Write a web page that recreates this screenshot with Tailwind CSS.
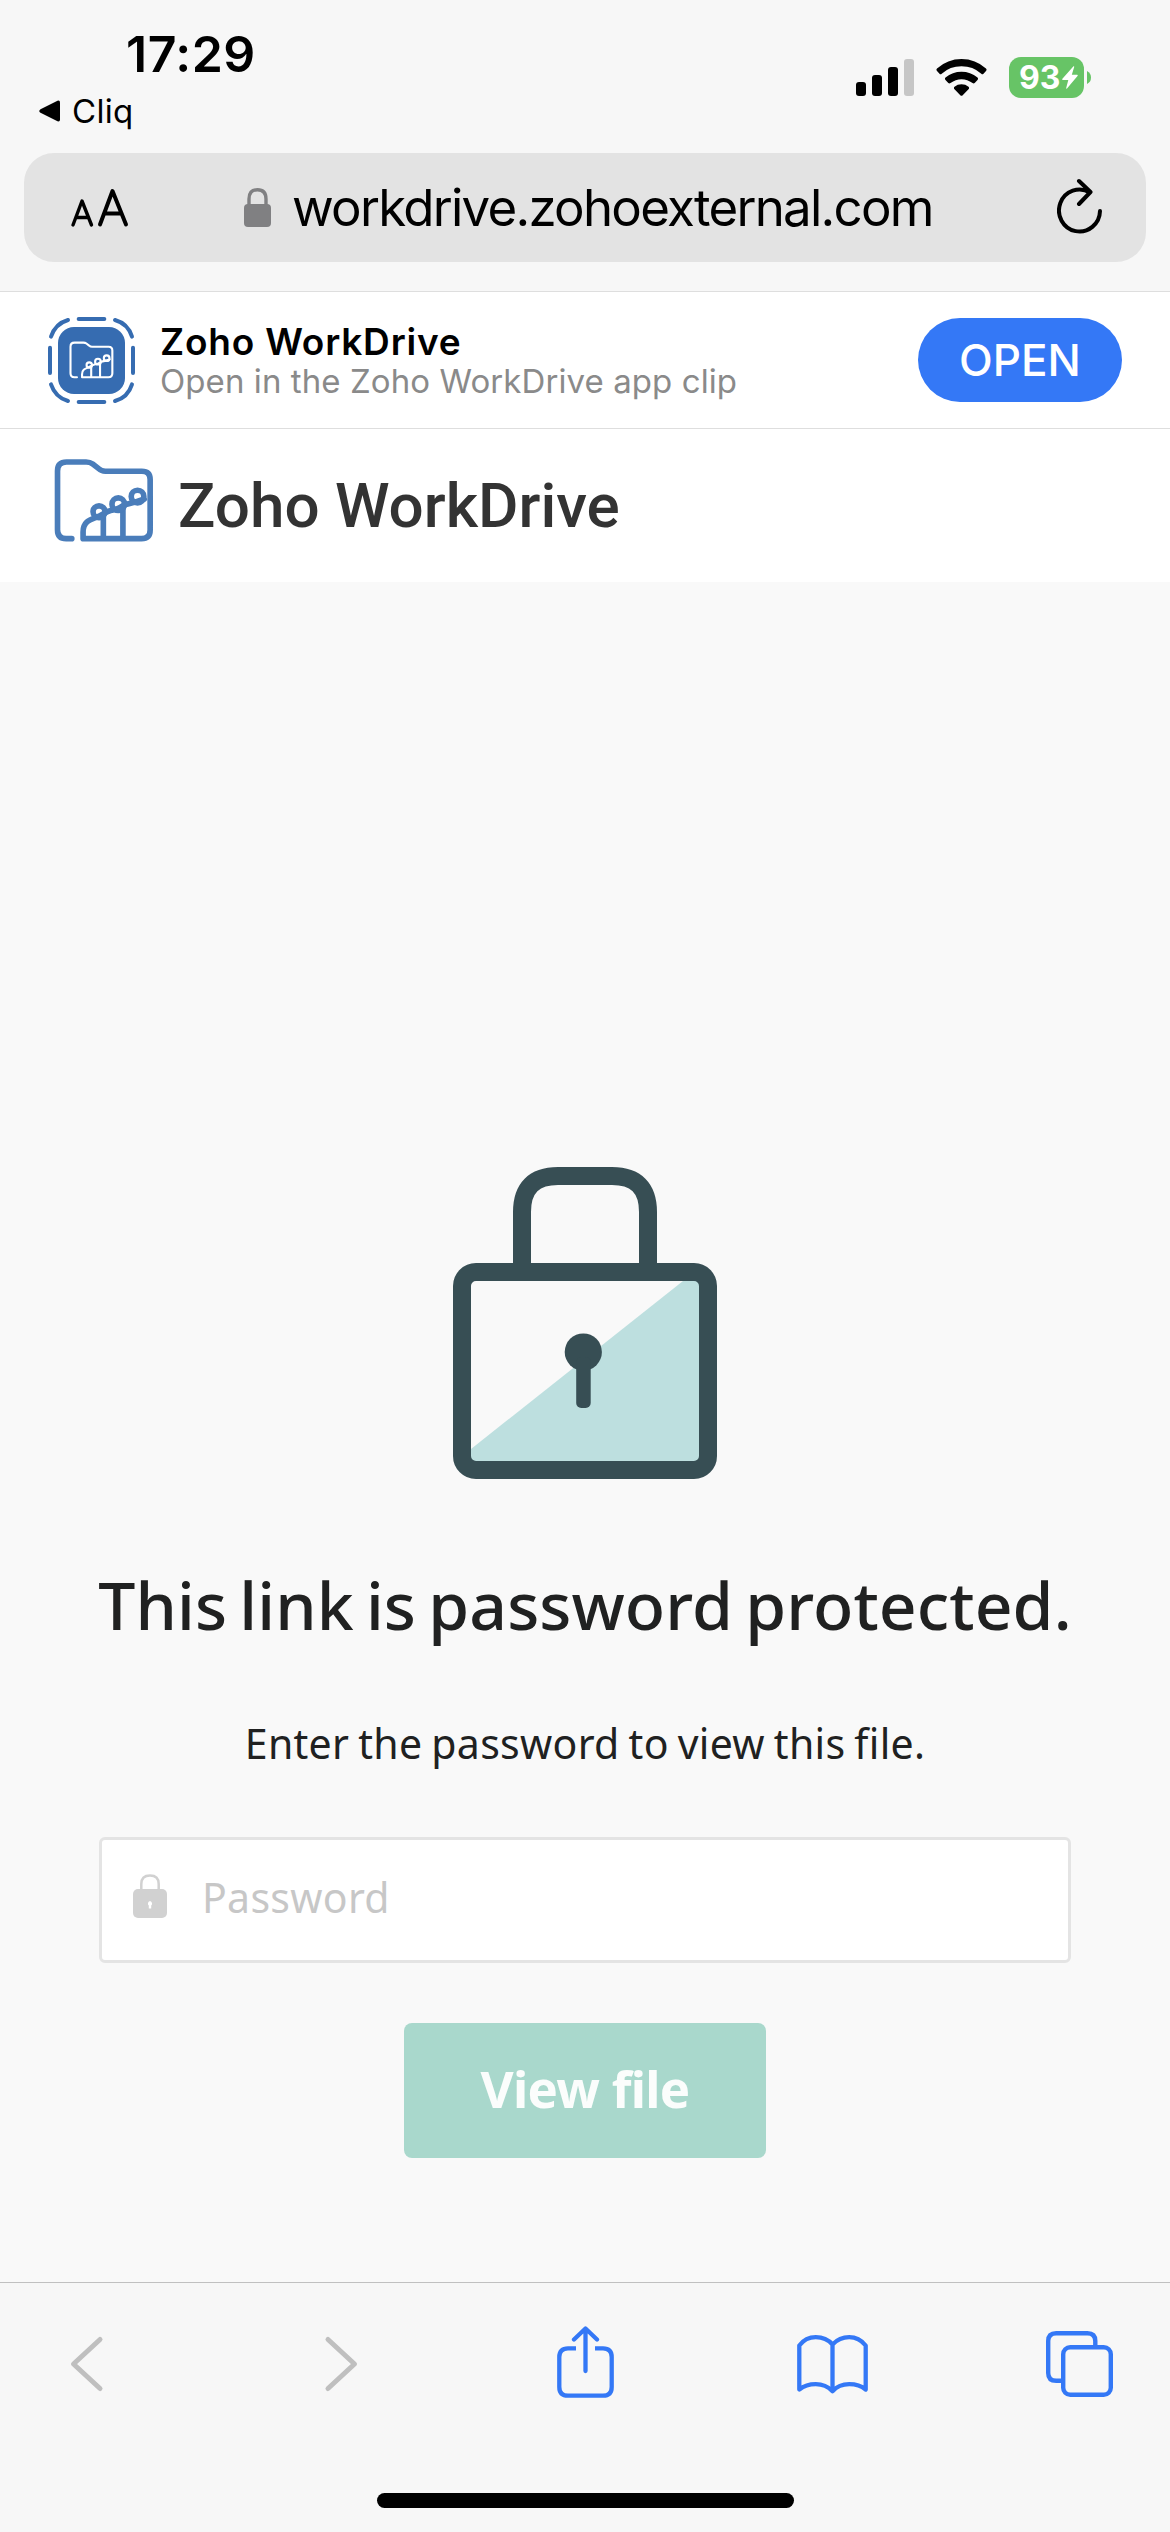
<!DOCTYPE html>
<html lang="en">
<head>
<meta charset="utf-8">
<title>Zoho WorkDrive</title>
<script src="https://cdn.jsdelivr.net/npm/@tailwindcss/browser@4"></script>
</head>
<body class="w-[1170px] h-[2532px] overflow-hidden flex flex-col bg-[#f9f9f9] font-['Inter',sans-serif] text-black">
<svg class="hidden">
  <symbol id="folder" viewBox="0 0 300 250">
    <g fill="none" stroke="currentColor" stroke-linecap="round" stroke-linejoin="round">
      <path d="M53 240H36Q10 240 10 213V36Q10 9 37 9H96Q108 9 116 15L134 29Q142 37 154 37H264Q289 37 289 62V214Q289 240 263 240H87V220C87 190 105 184 128 175C148 168 150 160 170 155C205 148 198 143 215 137C235 131 258 127 271 121M148 170V240M207 145V240"/>
      <circle cx="135" cy="159" r="18"/><circle cx="193" cy="136" r="19"/><circle cx="251" cy="113" r="19"/>
    </g>
  </symbol>
</svg>

<header class="h-[292px] shrink-0 bg-[#f7f7f7] border-b border-[#dedede]">
  <div class="h-[153px] flex justify-between pl-[38px] pr-[79px]">
    <div class="pt-6">
      <div class="pl-[88px] h-[60px] leading-[60px] text-[50px] font-semibold whitespace-nowrap tracking-[0.5px]">17:29</div>
      <div class="mt-[7px] h-10 flex items-center">
        <svg class="w-[22px] h-[22px]" viewBox="0 0 22 22"><path d="M2.5 9.2 19.500.7Q22 0 22 2.500V19.500Q22 22 19.500 21.300L2.500 12.800Q0 11 2.500 9.200Z"/></svg>
        <span class="ml-3 text-[33px] leading-10 tracking-[0.3px]">Cliq</span>
      </div>
    </div>
    <div class="mt-[57px] h-[41px] flex items-center">
      <svg class="w-[58px] h-[37px]" viewBox="0 0 58 37"><rect y="23" width="10" height="14" rx="3"/><rect x="16" y="16" width="10" height="21" rx="3"/><rect x="32" y="8" width="10" height="29" rx="3"/><rect x="48" width="10" height="37" rx="3" fill="#c6c6c6"/></svg>
      <svg class="ml-[22px] w-[51px] h-[37px]" viewBox="0 0 51 37"><path d="M1 9.500Q11.500 0 25.500 0T50 9.500Q51.200 10.800 50 12L47.500 14.700Q46.500 15.700 45.300 14.700 37 7.300 25.500 7.300T5.700 14.700Q4.500 15.700 3.500 14.700L1 12Q-.2 10.800 1 9.500ZM9.500 18.500Q16.500 12.700 25.500 12.700T41.500 18.500Q42.700 19.800 41.500 21L38.700 24Q37.700 24.800 36.500 24 31.500 20.200 25.500 20.200T14.500 24Q13.300 24.800 12.300 24L9.500 21Q8.300 19.800 9.500 18.500ZM18.500 27.700Q21.500 25.300 25.500 25.300T32.500 27.700Q33.700 28.900 32.500 30.200L26.700 36.200Q25.500 37.400 24.300 36.200L18.500 30.200Q17.300 28.900 18.500 27.700Z"/></svg>
      <div class="ml-[22px] w-[75px] h-[41px] rounded-[12px] bg-[#67c466] flex items-center pl-[10px] text-white">
        <span class="text-[32px] leading-[41px] font-bold">93</span>
        <svg class="ml-[2px] w-[16px] h-[23px]" viewBox="0 0 16 23" fill="#fff"><path d="M11.500.3Q12.400 0 12.200 1L9.800 8.800H15.200Q16.200 9 15.500 10L5 22.500Q4 23.200 4.200 22L6.300 14H.8Q-.2 13.800.4 12.800Z"/></svg>
      </div>
      <svg class="ml-[3px] w-1 h-[13px]" viewBox="0 0 4 13"><path d="M0 0Q4 2 4 6.500T0 13Z" fill="#67c466"/></svg>
    </div>
  </div>
  <div class="mx-6 h-[109px] rounded-[30px] bg-[#e3e3e3] flex items-center">
    <svg class="ml-[46px] w-[60px] h-[40px]" viewBox="0 0 60 40" fill="none" stroke="#000" stroke-linecap="round" stroke-linejoin="round"><path stroke-width="3.400" d="M3 37 12 13 21.500 37M6 29.500H18.500"/><path stroke-width="4" d="M30 36.500 42.500 3 56 36.500M34.500 25.500H51.500"/></svg>
    <svg class="ml-[114px] w-[27px] h-[39px]" viewBox="0 0 27 39"><rect y="16" width="27" height="23" rx="4" fill="#808082"/><path d="M5 18V11Q5 1.700 13.500 1.700T22 11V18" fill="none" stroke="#808082" stroke-width="3.400"/></svg>
    <span class="ml-[21px] w-[660px] text-[51px] leading-[64px] tracking-[-1.75px] whitespace-nowrap">workdrive.zohoexternal.com</span>
    <svg class="ml-[105px] mb-1 w-[46px] h-[56px]" viewBox="0 0 46 56" fill="none" stroke="#000" stroke-width="4" stroke-linecap="round" stroke-linejoin="round"><path d="M43 33A20.500 21 0 1 1 33 14.500M22 3 33.500 14 22 26"/></svg>
  </div>
</header>

<section class="h-[137px] shrink-0 bg-white border-b border-[#dedede] flex items-center pl-12 pr-12">
  <div class="w-[87px] h-[87px] grid place-items-center">
    <svg class="col-start-1 row-start-1 w-[87px] h-[87px]" viewBox="0 0 261 261" fill="none" stroke="#366cb1" stroke-width="12" stroke-linecap="round"><path d="M92 6H169M92 255H169M6 92V168M255 92V168M9 59Q22 20 60 9M201 9Q240 20 252 59M252 202Q240 241 201 252M60 252Q22 241 9 202"/></svg>
    <div class="col-start-1 row-start-1 w-[67px] h-[67px] rounded-[16px] bg-[#366cb1] grid place-items-center text-white">
      <svg class="w-[45px] h-[38px] stroke-[14]"><use href="#folder"/></svg>
    </div>
  </div>
  <div class="ml-[25px] flex-1 pt-[2px]">
    <div class="h-10 leading-[42px] text-[37px] font-semibold tracking-[0.8px]">Zoho WorkDrive</div>
    <div class="h-10 leading-10 text-[33px] text-[#8a8a8a] tracking-[0.08px]">Open in the Zoho WorkDrive app clip</div>
  </div>
  <button class="w-[204px] h-[84px] rounded-full bg-[#3478f6] text-white text-[44px] font-medium">OPEN</button>
</section>

<section class="h-[153px] shrink-0 bg-white flex items-center pl-[54px] pb-[10px]">
  <svg class="w-[100px] h-[83px] stroke-[17] text-[#4a7dba]"><use href="#folder"/></svg>
  <span class="ml-6 pt-[10px] text-[62px] leading-[72px] font-medium font-['Roboto',sans-serif] text-[#333]">Zoho WorkDrive</span>
</section>

<main class="flex-1 flex flex-col items-center pt-[585px] font-['Noto_Sans',sans-serif] text-[#202121]">
  <svg class="w-[264px] h-[312px]" viewBox="0 0 264 312"><path d="M18 282 230 114H250V297H18Z" fill="#bddfdf"/><rect x="9" y="105" width="246" height="198" rx="14" fill="none" stroke="#374e54" stroke-width="18"/><path d="M69 105V45Q69 9 105 9H159Q195 9 195 45V105" fill="none" stroke="#374e54" stroke-width="18"/><circle cx="130.300" cy="185" r="18.600" fill="#374e54"/><rect x="123.200" y="190" width="14.500" height="51" rx="5" fill="#374e54"/></svg>
  <h1 class="mt-[77px] h-24 leading-[96px] text-[66px] font-medium tracking-[0.1px] [word-spacing:-5px] whitespace-nowrap">This link is password protected.</h1>
  <p class="mt-[61px] h-[60px] leading-[60px] text-[41px] tracking-[0.3px] [word-spacing:-2px] whitespace-nowrap">Enter the password to view this file.</p>
  <div class="mt-[64px] w-[972px] h-[126px] border-[3px] border-[#e4e4e4] rounded-[6px] bg-white flex items-center pl-[31px]">
    <svg class="mb-2 w-[34px] h-[44px]" viewBox="0 0 34 44"><rect y="15" width="34" height="29" rx="5" fill="#d1d1d1"/><path d="M8.300 16V10Q8.300 1.500 17 1.500T25.700 10V16" fill="none" stroke="#d1d1d1" stroke-width="2.500"/><path d="M17 27A2.600 2.600 0 0 1 18.200 31.500V34.500H15.800V31.500A2.600 2.600 0 0 1 17 27Z" fill="#fff"/></svg>
    <span class="ml-[35px] pb-[5px] text-[41px] tracking-[0.3px] text-[#c7c7c7]">Password</span>
  </div>
  <button class="mt-[60px] pb-[5px] w-[362px] h-[135px] rounded-[8px] bg-[#a9d8cc] text-[#fbfdfc] text-[51px] tracking-[-0.7px] font-bold">View file</button>
</main>

<footer class="h-[250px] shrink-0 bg-[#f7f7f7] border-t border-[#c0c0c0] flex flex-col items-center">
  <div class="w-full h-[162px] flex items-center pl-[69px]">
    <svg class="w-[35px] h-[58px]" viewBox="0 0 35 58" fill="none" stroke="#bfbfbf" stroke-width="5" stroke-linecap="round" stroke-linejoin="round"><path d="M31 4.500 4.500 29 31 53.500"/></svg>
    <svg class="ml-[220px] w-[35px] h-[58px]" viewBox="0 0 35 58" fill="none" stroke="#bfbfbf" stroke-width="5" stroke-linecap="round" stroke-linejoin="round"><path d="M4 4.500 30.500 29 4 53.500"/></svg>
    <svg class="ml-[198px] mb-1 w-[57px] h-[72px]" viewBox="0 0 57 72" fill="none" stroke="#3478f6" stroke-width="4.300"><path d="M19 22.300H11Q2.300 22.300 2.300 31V61Q2.300 69.700 11 69.700H46Q54.700 69.700 54.700 61V31Q54.700 22.300 46 22.300H38"/><path stroke-linecap="round" stroke-linejoin="round" d="M28.500 3V45M17 13.500 28.500 2.500 40 13.500"/></svg>
    <svg class="ml-[183px] w-[71px] h-[59px]" viewBox="0 0 71 59" fill="none" stroke="#3478f6" stroke-width="4.300" stroke-linecap="round" stroke-linejoin="round"><path d="M35.500 9.500V56M35.500 9.500Q29 2.200 18.800 2.200T2.300 10.500V54.500Q9 49.200 18.800 49.200T35.500 56.200Q42 49.200 52.200 49.200T68.700 54.500V10.500Q62 2.200 52.200 2.200T35.500 9.500"/></svg>
    <svg class="ml-[178px] w-[67px] h-[66px]" viewBox="0 0 67 66" fill="none" stroke="#3478f6" stroke-width="4.400"><rect x="17.200" y="16.200" width="47.600" height="47.600" rx="7"/><path d="M17 49.800H10.200Q2.200 49.800 2.200 42V10Q2.200 2.200 10.200 2.200H41.500Q49.300 2.200 49.300 10V16"/></svg>
  </div>
  <div class="mt-[48px] w-[417px] h-[15px] rounded-full bg-black"></div>
</footer>
</body>
</html>
